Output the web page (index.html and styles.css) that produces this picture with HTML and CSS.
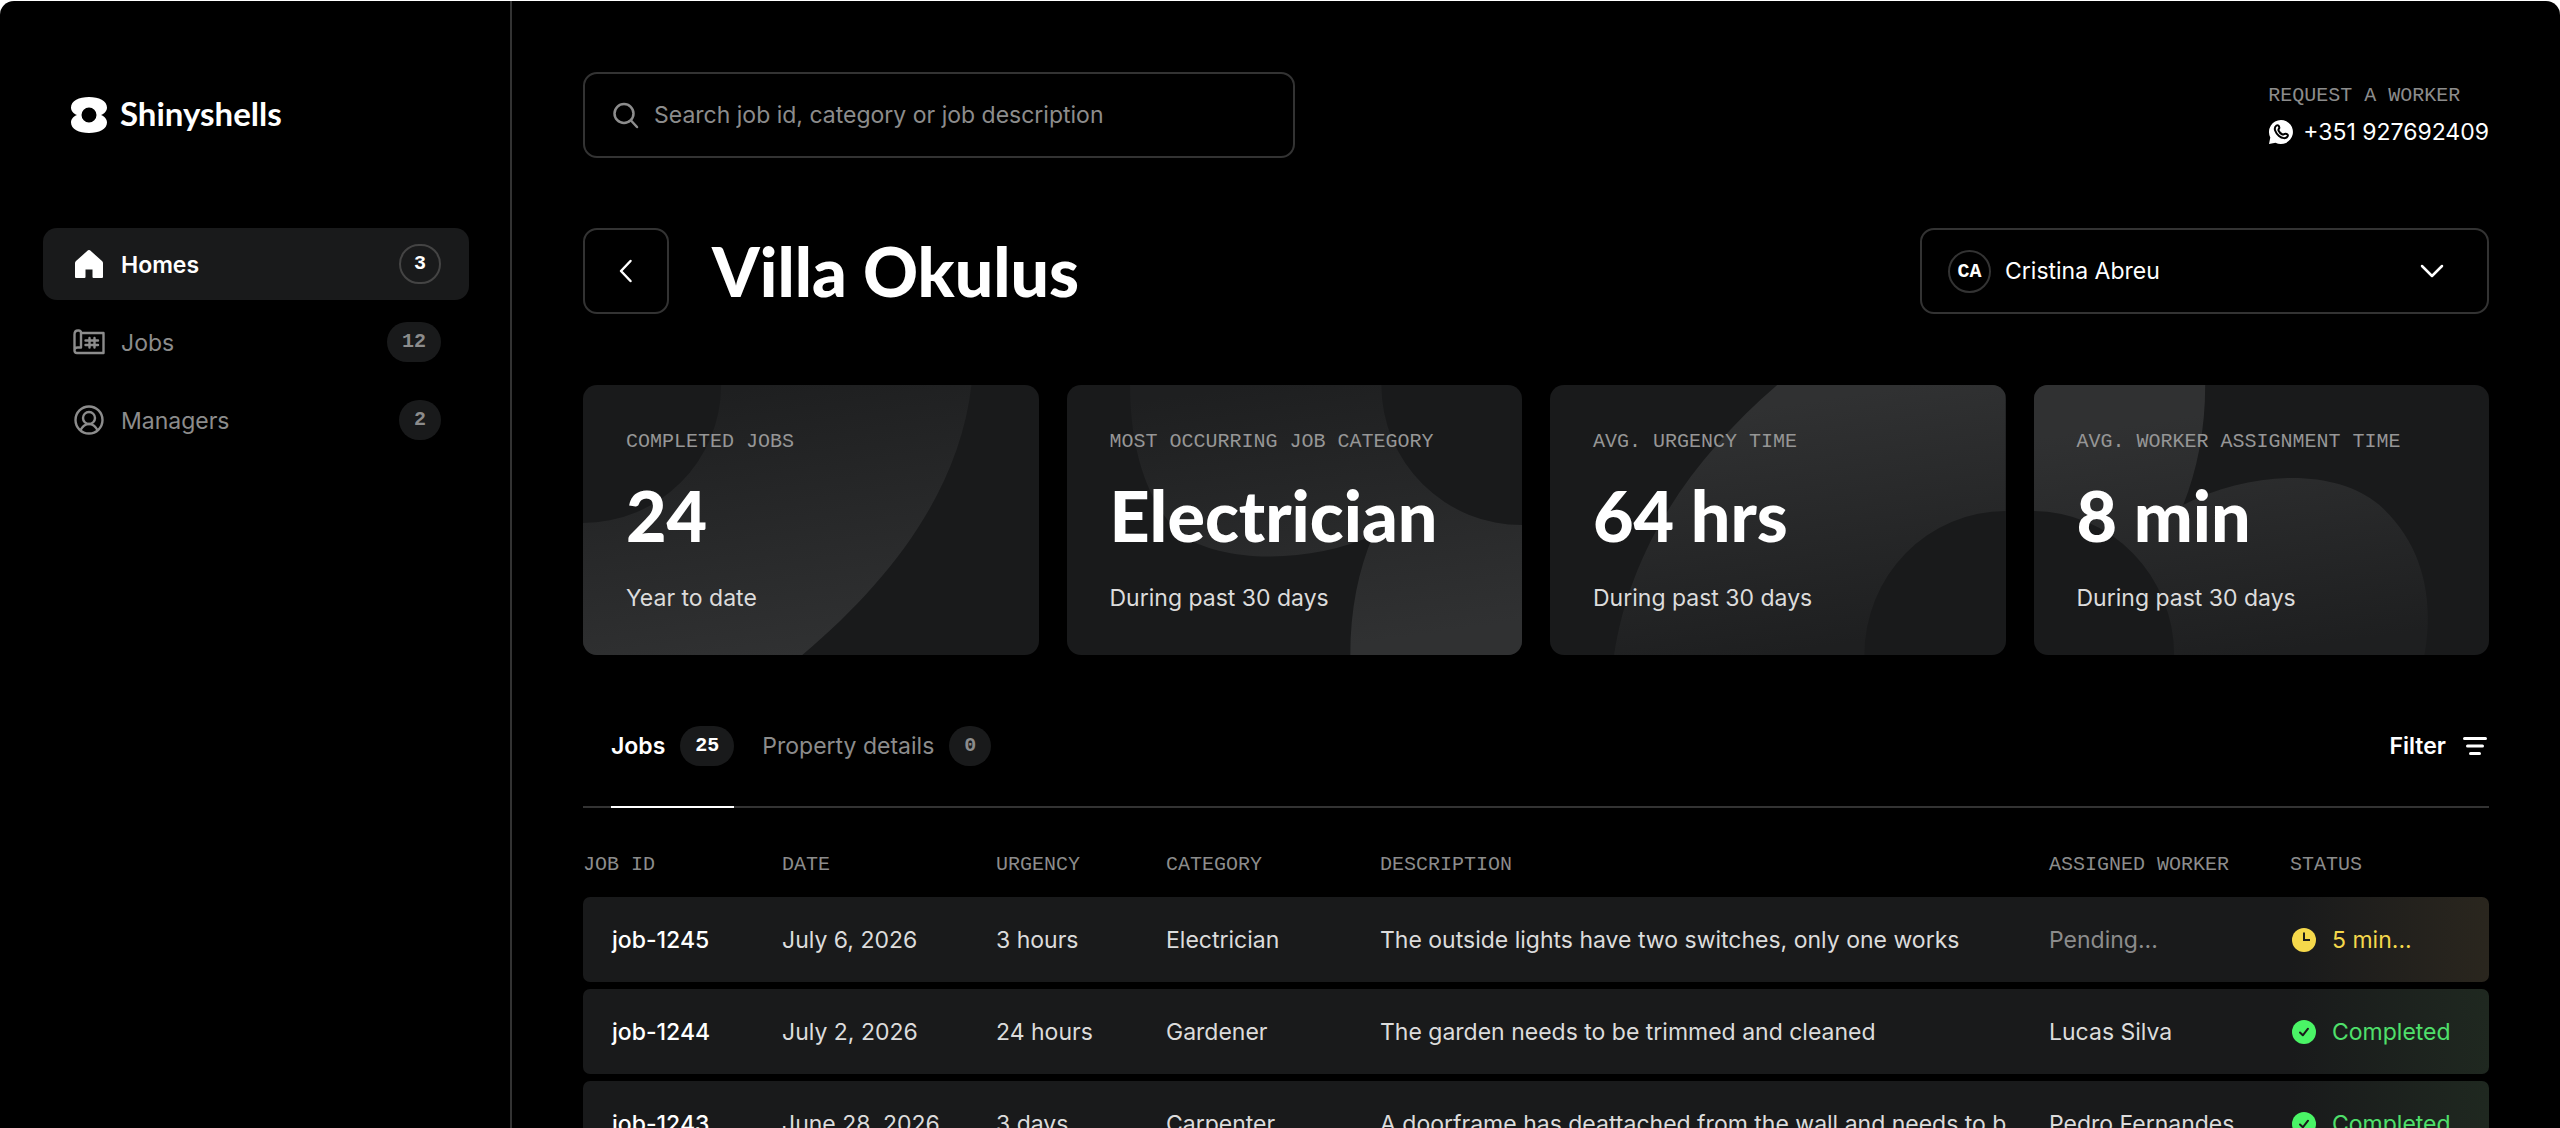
FILE: index.html
```html
<!DOCTYPE html>
<html lang="en">
<head>
    <meta charset="UTF-8">
    <meta name="viewport" content="width=device-width, initial-scale=1.0">
    <title>Villa Okulus - Shinyshells</title>
    <link rel="stylesheet" href="styles.css">
</head>
<body>

<div class="app">
    <aside class="sidebar">
        <a href="#" class="logo">
            <svg width="36" height="36" viewBox="0 0 36 36" fill="#fff" fill-rule="evenodd">
                <path d="M18 0C28 0 36 4 36 10.500C36 14 33.500 16.500 30 18C33.500 19.500 36 22 36 25.500C36 32 28 36 18 36C8 36 0 32 0 25.500C0 22 2.500 19.500 6 18C2.500 16.500 0 14 0 10.500C0 4 8 0 18 0ZM18 10.500A7.500 7.500 0 1 0 18 25.500A7.500 7.500 0 1 0 18 10.500Z"/>
            </svg>
            <span>Shinyshells</span>
        </a>

        <nav class="menu">
            <a href="#" class="menu-item active">
                <svg width="32" height="32" viewBox="0 0 32 32" fill="#fff">
                    <path d="M15 2.300Q16 1.500 17 2.300L29 13Q30 14 30 15V29Q30 30 29 30H20.500Q19.500 30 19.500 29V21.500H12.500V29Q12.500 30 11.500 30H3Q2 30 2 29V15Q2 14 3 13Z"/>
                </svg>
                <span class="menu-text">Homes</span>
                <span class="badge">3</span>
            </a>
            <a href="#" class="menu-item">
                <svg width="32" height="32" viewBox="0 0 32 32" fill="none" stroke="currentColor" stroke-width="2.400" stroke-linecap="round" stroke-linejoin="round">
                    <path d="M8 21.500V7C8 5 7 4.500 5.500 4.500H5C3 4.500 1.500 6 1.500 8.500V24.500C1.500 26.500 2.500 27 4 27H30.500V7H8M8 21.500H4.500C2.500 21.500 1.500 23 1.500 24.500"/>
                    <path d="M12.500 14.500H25M12.500 19H25M16.500 12V21.500M21.500 12V21.500"/>
                </svg>
                <span class="menu-text">Jobs</span>
                <span class="badge">12</span>
            </a>
            <a href="#" class="menu-item">
                <svg width="32" height="32" viewBox="0 0 32 32" fill="none" stroke="currentColor" stroke-width="2.400">
                    <circle cx="16" cy="16" r="13.500"/>
                    <circle cx="16" cy="14" r="6"/>
                    <path d="M7.500 26C9.500 22.500 12 20 16 20S22.500 22.500 24.500 26"/>
                </svg>
                <span class="menu-text">Managers</span>
                <span class="badge">2</span>
            </a>
        </nav>
    </aside>

    <main class="content">
        <header class="topbar">
            <label class="search">
                <svg width="28" height="28" viewBox="0 0 28 28" fill="none" stroke="#8c8c8c" stroke-width="2.500" stroke-linecap="round">
                    <circle cx="13" cy="12.500" r="9.500"/>
                    <path d="M20 19.500L26 26"/>
                </svg>
                <input type="text" aria-label="Search" placeholder="Search job id, category or job description">
            </label>
            <div class="request">
                <div class="label">Request a worker</div>
                <a href="#" class="phone">
                    <svg width="26" height="26" viewBox="0 0 26 26">
                        <path d="M13 1A12 12 0 1 1 7.500 23.700L1 25L2.300 18.500A12 12 0 0 1 13 1Z" fill="#fff"/>
                        <path d="M8.500 6.500C10 5.500 11 7 11.300 8.500C11.500 9.800 10 10.200 10.500 11.500C11.300 13.300 12.700 14.700 14.500 15.500C15.800 16 16.200 14.500 17.500 14.700C19.500 15 20.500 16 19.500 17.500C18 20 14 19.500 11 17C7.500 14 5 9 8.500 6.500Z" fill="none" stroke="#000" stroke-width="2"/>
                    </svg>
                    <span>+351 927692409</span>
                </a>
            </div>
        </header>

        <div class="title-row">
            <button class="back" aria-label="Back">
                <svg width="28" height="28" viewBox="0 0 28 28" fill="none" stroke="#fff" stroke-width="2.500" stroke-linecap="round" stroke-linejoin="round">
                    <path d="M18.500 4L9 14L18.500 24"/>
                </svg>
            </button>
            <h1>Villa Okulus</h1>
            <div class="manager">
                <span class="avatar">CA</span>
                <select aria-label="Manager">
                    <option>Cristina Abreu</option>
                </select>
                <svg width="28" height="28" viewBox="0 0 28 28" fill="none" stroke="#fff" stroke-width="2.500" stroke-linecap="round" stroke-linejoin="round">
                    <path d="M4 9L14 19L24 9"/>
                </svg>
            </div>
        </div>

        <section class="cards">
            <div class="card">
                <svg class="card-bg" viewBox="0 0 455 270" preserveAspectRatio="none">
                    <defs>
                        <linearGradient id="fadeDown" gradientUnits="userSpaceOnUse" x1="180" y1="0" x2="220" y2="270">
                            <stop offset="0" stop-color="#1e1f20"/>
                            <stop offset="1" stop-color="#303132"/>
                        </linearGradient>
                        <linearGradient id="fadeUp" gradientUnits="userSpaceOnUse" x1="180" y1="0" x2="220" y2="270">
                            <stop offset="0.100" stop-color="#303132"/>
                            <stop offset="1" stop-color="#1e1f20"/>
                        </linearGradient>
                    </defs>
                    <path fill="url(#fadeDown)" d="M138 0A138 138 0 0 1 0 138V270H219C308 195 376 105 388 0Z"/>
                </svg>
                <div class="label">Completed jobs</div>
                <div class="value">24</div>
                <div class="note">Year to date</div>
            </div>
            <div class="card">
                <svg class="card-bg" viewBox="0 0 455 270" preserveAspectRatio="none">
                    <path fill="url(#fadeDown)" d="M63 0C63 60 78 115 112 148C155 180 245 178 306 150C291 185 283 225 283 270H455V140A140 140 0 0 1 314 0Z"/>
                </svg>
                <div class="label">Most occurring job category</div>
                <div class="value">Electrician</div>
                <div class="note">During past 30 days</div>
            </div>
            <div class="card">
                <svg class="card-bg" viewBox="0 0 455 270" preserveAspectRatio="none">
                    <path fill="url(#fadeUp)" d="M227 0C140 75 80 165 64 270H314A141 144 0 0 1 455 126V0Z"/>
                </svg>
                <div class="label">Avg. urgency time</div>
                <div class="value">64 hrs</div>
                <div class="note">During past 30 days</div>
            </div>
            <div class="card">
                <svg class="card-bg" viewBox="0 0 455 270" preserveAspectRatio="none">
                    <path fill="url(#fadeUp)" d="M0 0H171C171 45 163 85 149 120C215 86 300 82 345 120C395 165 398 225 390 270H140A141 144 0 0 0 0 126Z"/>
                </svg>
                <div class="label">Avg. worker assignment time</div>
                <div class="value">8 min</div>
                <div class="note">During past 30 days</div>
            </div>
        </section>

        <div class="tabs">
            <button class="tab active">Jobs <span class="badge">25</span></button>
            <button class="tab">Property details <span class="badge">0</span></button>
            <button class="filter">
                Filter
                <svg width="28" height="28" viewBox="0 0 28 28" fill="none" stroke="#fff" stroke-width="3" stroke-linecap="round">
                    <path d="M3.500 6.500H24.500M6.500 14H21.500M9.500 21.500H18.500"/>
                </svg>
            </button>
        </div>

        <table class="jobs">
            <thead>
                <tr>
                    <th class="col-id">Job ID</th>
                    <th class="col-date">Date</th>
                    <th class="col-urgency">Urgency</th>
                    <th class="col-category">Category</th>
                    <th>Description</th>
                    <th class="col-worker">Assigned worker</th>
                    <th class="col-status">Status</th>
                </tr>
            </thead>
            <tbody>
                <tr>
                    <td>job-1245</td>
                    <td>July 6, 2026</td>
                    <td>3 hours</td>
                    <td>Electrician</td>
                    <td>The outside lights have two switches, only one works</td>
                    <td class="pending">Pending...</td>
                    <td class="waiting">
                        <div class="status">
                            <svg width="28" height="28" viewBox="0 0 28 28">
                                <circle cx="14" cy="14" r="12" fill="#f5d84b"/>
                                <path d="M14 6.500V14H20" fill="none" stroke="#1d1c1a" stroke-width="2"/>
                            </svg>
                            5 min...
                        </div>
                    </td>
                </tr>
                <tr>
                    <td>job-1244</td>
                    <td>July 2, 2026</td>
                    <td>24 hours</td>
                    <td>Gardener</td>
                    <td>The garden needs to be trimmed and cleaned</td>
                    <td>Lucas Silva</td>
                    <td class="done">
                        <div class="status">
                            <svg width="28" height="28" viewBox="0 0 28 28">
                                <circle cx="14" cy="14" r="12" fill="#4af466"/>
                                <path d="M10 14.500L12.800 17.300L18 10.700" fill="none" stroke="#191c1a" stroke-width="2" stroke-linecap="round" stroke-linejoin="round"/>
                            </svg>
                            Completed
                        </div>
                    </td>
                </tr>
                <tr>
                    <td>job-1243</td>
                    <td>June 28, 2026</td>
                    <td>3 days</td>
                    <td>Carpenter</td>
                    <td>A doorframe has deattached from the wall and needs to b</td>
                    <td>Pedro Fernandes</td>
                    <td class="done">
                        <div class="status">
                            <svg width="28" height="28" viewBox="0 0 28 28">
                                <circle cx="14" cy="14" r="12" fill="#4af466"/>
                                <path d="M10 14.500L12.800 17.300L18 10.700" fill="none" stroke="#191c1a" stroke-width="2" stroke-linecap="round" stroke-linejoin="round"/>
                            </svg>
                            Completed
                        </div>
                    </td>
                </tr>
            </tbody>
        </table>
    </main>
</div>

</body>
</html>
```
FILE: styles.css
```css
* {
    box-sizing: border-box;
}

body {
    margin: 0;
    padding-top: 1px;
    background-color: #fff;
    color: #fff;
    font-family: Inter, "Liberation Sans", sans-serif;
    font-size: 23px;
    line-height: 32px;
}

a {
    color: inherit;
    text-decoration: none;
}

button,
input,
select {
    font: inherit;
    color: inherit;
    background: none;
    border: none;
    padding: 0;
    margin: 0;
    outline: none;
}

button {
    cursor: pointer;
}

svg {
    display: block;
    flex-shrink: 0;
}

.app {
    display: flex;
    height: calc(100vh - 1px);
    overflow: hidden;
    background-color: #000;
    border-radius: 14px 14px 0 0;
}

/* Sidebar */
.sidebar {
    width: 512px;
    flex-shrink: 0;
    padding: 92px 41px 0 43px;
    border-right: 2px solid #333;
}

.logo {
    display: flex;
    align-items: center;
    gap: 13px;
    height: 44px;
    padding-left: 28px;
    font-family: Lato, sans-serif;
    font-size: 33px;
    font-weight: 700;
}

.logo span {
    padding-bottom: 4px;
}

.menu {
    display: flex;
    flex-direction: column;
    gap: 6px;
    margin-top: 91px;
}

.menu-item {
    display: flex;
    align-items: center;
    gap: 16px;
    height: 72px;
    padding: 0 28px 0 30px;
    border-radius: 14px;
    color: #8c8c8c;
}

.menu-text {
    flex: 1;
    padding-top: 2px;
}

.badge {
    min-width: 42px;
    padding: 4px 15px;
    border-radius: 20px;
    background-color: #191a1b;
    font-family: "Liberation Mono", monospace;
    font-size: 20px;
    font-weight: 700;
    text-align: center;
}

.menu-item.active {
    background-color: #191a1b;
    color: #fff;
    font-weight: 600;
}

.menu-item.active .badge {
    border: 2px solid #444;
    padding: 2px 13px;
}

/* Main area */
.content {
    flex: 1;
    min-width: 0;
    padding: 71px 71px 0;
}

.topbar {
    display: flex;
    align-items: center;
    justify-content: space-between;
}

.search {
    display: flex;
    align-items: center;
    gap: 15px;
    width: 712px;
    height: 86px;
    padding: 0 26px;
    border: 2px solid #333;
    border-radius: 14px;
}

.search input {
    flex: 1;
}

.search input::placeholder {
    color: #8c8c8c;
    opacity: 1;
}

.label {
    color: #8c8c8c;
    font-family: "Liberation Mono", monospace;
    font-size: 20px;
    line-height: 28px;
    text-transform: uppercase;
}

.phone {
    display: flex;
    align-items: center;
    gap: 9px;
    margin-top: 6px;
}

.title-row {
    display: flex;
    align-items: center;
    margin-top: 70px;
}

.back {
    display: flex;
    align-items: center;
    justify-content: center;
    width: 86px;
    height: 86px;
    border: 2px solid #333;
    border-radius: 14px;
}

h1 {
    flex: 1;
    margin: 0 0 0 43px;
    font-family: Lato, sans-serif;
    font-size: 68px;
    font-weight: 900;
    line-height: 86px;
}

.manager {
    display: flex;
    align-items: center;
    width: 569px;
    height: 86px;
    padding: 0 41px 0 26px;
    border: 2px solid #333;
    border-radius: 14px;
}

.avatar {
    width: 43px;
    height: 43px;
    margin-right: 14px;
    border: 2px solid #333;
    border-radius: 50%;
    font-family: "Liberation Mono", monospace;
    font-size: 20px;
    font-weight: 700;
    line-height: 39px;
    text-align: center;
}

.manager select {
    flex: 1;
    appearance: none;
}

/* Stat cards */
.cards {
    display: grid;
    grid-template-columns: repeat(4, 1fr);
    gap: 28px;
    margin-top: 71px;
}

.card {
    position: relative;
    padding: 43px 43px 41px;
    border-radius: 14px;
    background-color: #191a1b;
    overflow: hidden;
}

.card-bg {
    position: absolute;
    top: 0;
    left: 0;
    width: 100%;
    height: 100%;
}

.card .label,
.value,
.note {
    position: relative;
}

.card .label {
    color: #969696;
}

.value {
    margin: 15px 0 23px;
    font-family: Lato, sans-serif;
    font-size: 70px;
    font-weight: 900;
    line-height: 88px;
}

.note {
    color: #dcdcdc;
}

/* Tabs */
.tabs {
    display: flex;
    gap: 28px;
    height: 110px;
    margin-top: 43px;
    padding: 0 0 0 28px;
    border-bottom: 2px solid #333;
}

.tab {
    display: flex;
    align-items: center;
    gap: 15px;
    height: 110px;
    padding-bottom: 12px;
    border-bottom: 2px solid transparent;
    color: #8c8c8c;
}

.tab.active {
    border-color: #fff;
    color: #fff;
    font-weight: 600;
}

.filter {
    display: flex;
    align-items: center;
    gap: 15px;
    margin-left: auto;
    padding-bottom: 12px;
    font-weight: 600;
}

/* Jobs table */
.jobs {
    width: 100%;
    margin-top: 36px;
    table-layout: fixed;
    border-collapse: separate;
    border-spacing: 0 7px;
}

.jobs th {
    height: 39px;
    padding: 0 0 11px;
    color: #8c8c8c;
    font-family: "Liberation Mono", monospace;
    font-size: 20px;
    font-weight: 400;
    line-height: 28px;
    text-align: left;
    text-transform: uppercase;
    white-space: nowrap;
}

.jobs td {
    height: 85px;
    padding: 0;
    background-color: #191a1b;
    color: #dcdcdc;
    white-space: nowrap;
}

.jobs td:first-child {
    padding-left: 29px;
    border-radius: 7px 0 0 7px;
    color: #fff;
    font-weight: 500;
}

.jobs td:last-child {
    border-radius: 0 7px 7px 0;
}

.col-id,
.col-status {
    width: 199px;
}

.col-date,
.col-category {
    width: 214px;
}

.col-urgency {
    width: 170px;
}

.col-worker {
    width: 241px;
}

.jobs .pending {
    color: #8c8c8c;
}

.jobs .waiting {
    background-image: linear-gradient(to right, #191a1b, #2a261e);
    color: #f5d84b;
}

.jobs .done {
    background-image: linear-gradient(to right, #191a1b, #1f2820);
    color: #4fe06b;
}

.status {
    display: flex;
    align-items: center;
    gap: 14px;
}
```
